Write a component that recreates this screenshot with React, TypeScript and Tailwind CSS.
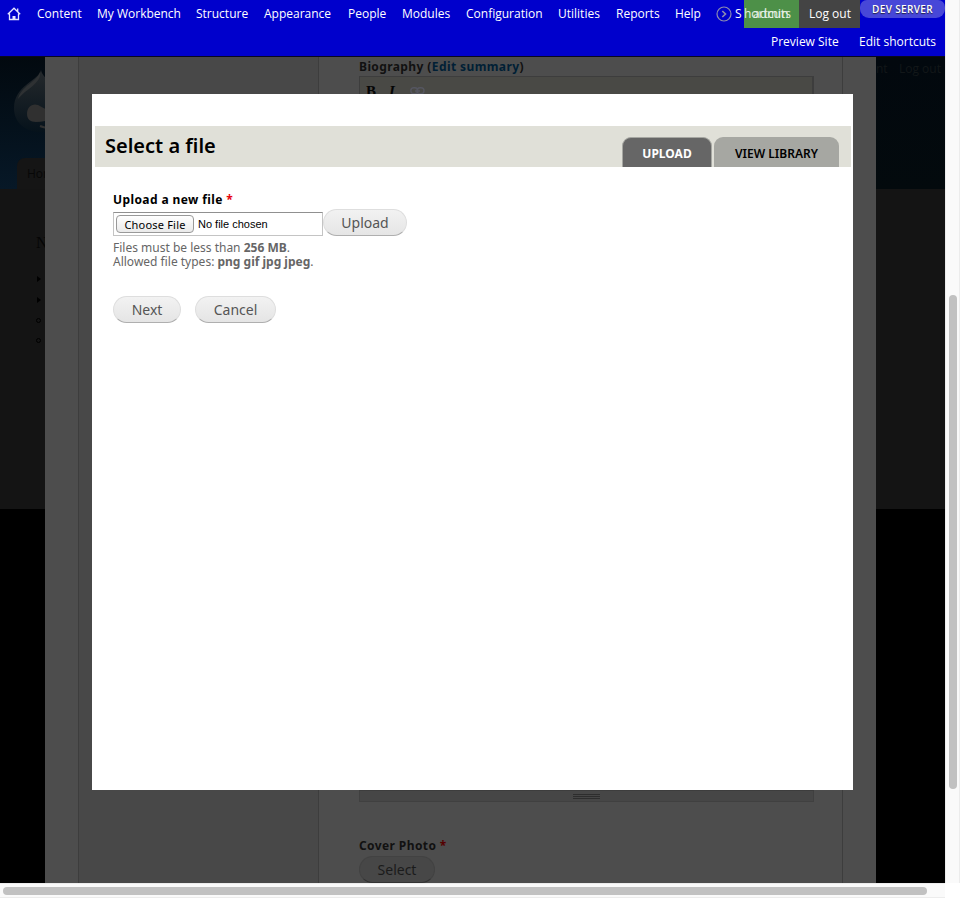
import React from "react";

const menu: [string, string][] = [
  ["Content", "w-[60px]"],
  ["My Workbench", "w-[99px]"],
  ["Structure", "w-[68px]"],
  ["Appearance", "w-[84px]"],
  ["People", "w-[54px]"],
  ["Modules", "w-[64px]"],
  ["Configuration", "w-[92px]"],
  ["Utilities", "w-[58px]"],
  ["Reports", "w-[59px]"],
  ["Help", "w-[41px]"],
];

function Toolbar() {
  return (
    <header className="relative h-[57px] shrink-0 border-b border-[#080820] bg-[#0000cc] font-['Open_Sans',sans-serif] text-[12px] font-medium text-white">
      <div className="flex h-7 items-center whitespace-nowrap leading-7">
        <svg className="ml-[7px] mr-[16px] shrink-0" width="14" height="14" viewBox="0 0 14 14" fill="none" stroke="#e4e4ff" strokeWidth="1.3">
          <path d="M.8 7.2 7 1.2l6.2 6M2.5 6.5v6h9v-6M10.7 4.4V1.5" />
          <path d="M5.5 9h3v3.5h-3z" fill="#e4e4ff" stroke="none" />
        </svg>
        <nav className="flex">
          {menu.map(([label, width]) => (
            <a key={label} className={`${width} shrink-0`}>{label}</a>
          ))}
        </nav>
        <svg className="mr-[3px] shrink-0" width="16" height="16" viewBox="0 0 16 16" fill="none" stroke="#8c8cb0" strokeWidth="1.2">
          <circle cx="8" cy="8" r="7" />
          <path d="m6.3 5 3.2 3-3.2 3" strokeWidth="1.6" />
        </svg>
        <a className="w-[9px] shrink-0">S</a>
        <span className="relative h-7 w-[55px] shrink-0 bg-[#4d9048]">
          <span className="absolute left-0 top-0 text-[#e5f0e5]">hortcuts</span>
          <span className="absolute left-[9px] top-0 text-[#e5f0e5]">admin</span>
        </span>
        <a className="h-7 w-[61px] shrink-0 bg-[#444] pl-[10px]">Log out</a>
        <span className="h-[18px] w-[85px] shrink-0 self-start rounded-b-[9px] rounded-t-[7px] bg-[#4747d8] text-center text-[10px] font-semibold leading-[18px] tracking-[0.35px] [text-shadow:0_1px_1px_#224]">DEV SERVER</span>
      </div>
      <div className="flex h-7 justify-end leading-7">
        <a className="w-[88px]">Preview Site</a>
        <a className="w-[86px]">Edit shortcuts</a>
      </div>
    </header>
  );
}

function LeftStrip() {
  return (
    <aside className="flex w-[45px] shrink-0 flex-col overflow-hidden bg-black">
      <div className="flex h-[132px] flex-col bg-linear-to-b from-[#02090f] to-[#071827]">
        <svg className="ml-[14px] mt-[12px] shrink-0" width="50" height="66" viewBox="0 0 50 66">
          <defs>
            <linearGradient id="drop" x1="0" y1="0" x2="0" y2="1">
              <stop offset="0" stopColor="#25292c" />
              <stop offset="1" stopColor="#06121b" />
            </linearGradient>
          </defs>
          <path d="M27 1C25 12 0 16 0 39c0 16 13 24 27 24s23-9 23-24C50 19 29 12 27 1Z" fill="url(#drop)" />
          <path d="M26 3C23 13 7 17 4 30 12 20 28 14 26 3Z" fill="#2e3133" />
          <path d="M13 45c0-7 5-11 11-9 6 3 10 6 15 8v4c-5 4-11 5-17 5s-9-3-9-8Z" fill="#303030" />
          <path d="M26 57c5 2 9 2 12 1" stroke="#303030" strokeWidth="2" fill="none" />
        </svg>
        <div className="ml-[17px] mt-auto h-[31px] w-10 shrink-0 rounded-tl-lg bg-[#151515] pl-[10px] font-['Open_Sans',sans-serif] text-[12px] leading-[31px] text-[#070707]">Home</div>
      </div>
      <div className="h-[320px] shrink-0 bg-[#141414] pl-[36px] pt-[43px] text-[#050505]">
        <div className="h-[22px] font-['Liberation_Serif',serif] text-[16px] leading-[22px]">N</div>
        <div className="mt-[22px] flex flex-col gap-[15px]">
          <i className="h-0 w-0 border-y-[3px] border-l-[4px] border-y-transparent border-l-black ml-px" />
          <i className="h-0 w-0 border-y-[3px] border-l-[4px] border-y-transparent border-l-black ml-px" />
          <i className="h-[5px] w-[5px] rounded-full border border-black" />
          <i className="h-[5px] w-[5px] rounded-full border border-black" />
        </div>
      </div>
    </aside>
  );
}

function RightStrip() {
  return (
    <aside className="flex w-[69px] shrink-0 flex-col overflow-hidden bg-black">
      <div className="flex h-[132px] bg-linear-to-b from-[#02080e] to-[#030a0d] font-['Open_Sans',sans-serif] text-[12px] leading-6 text-[#121719]">
        <span className="w-[23px]">nt</span>
        <span className="whitespace-nowrap">Log out</span>
      </div>
      <div className="h-[320px] bg-[#141414]" />
    </aside>
  );
}

function EditForm() {
  return (
    <main className="flex w-[831px] shrink-0 bg-[#4d4d4d] px-[33px] font-['Noto_Sans',sans-serif]">
      <div className="w-[241px] shrink-0 border-x border-[#3d3d3d] bg-[#484848]" />
      <div className="flex grow flex-col border-r border-[#3d3d3d] pl-[40px]">
        <div className="h-[19px] whitespace-nowrap text-[12px] font-bold leading-[19px] tracking-[0.4px] text-[#111]">
          Biography (<a className="text-[#001f35]">Edit summary</a>)
        </div>
        <div className="flex h-[715px] w-[455px] border border-r-2 border-[#3d3d3d] bg-[#494945] pl-[6px] pt-[5px] font-['Liberation_Serif',serif] text-[15px] font-bold leading-[18px] text-[#050505]">
          <span className="w-[23px]">B</span>
          <span className="w-[21px] italic">I</span>
          <svg width="15" height="8" viewBox="0 0 15 8" className="mt-[5px]" fill="none" stroke="#555660" strokeWidth="1.4">
            <rect x=".8" y=".8" width="7" height="6" rx="3" /><rect x="7" y=".8" width="7" height="6" rx="3" /><path d="M5 4h5" />
          </svg>
        </div>
        <div className="flex h-[11px] w-[455px] justify-center border border-t-0 border-[#404040] bg-[#464646] pt-[3px]">
          <div className="h-[5px] w-[27px] border-y border-[#2d2d2d] pt-px"><div className="h-px bg-[#2d2d2d]" /></div>
        </div>
        <div className="mt-[34px] h-[19px] text-[12px] font-bold leading-[19px] tracking-[0.4px] text-[#111]">Cover Photo <span className="text-[#500]">*</span></div>
        <button className="mt-[1px] h-[27px] w-[76px] shrink-0 rounded-full border border-[#424242] border-b-[#333] bg-[#474747] text-[14px] leading-[25px] text-[#1b1b1b]">Select</button>
      </div>
    </main>
  );
}

function Pill({ label, width }: { label: string; width: string }) {
  return (
    <button className={`${width} h-[27px] shrink-0 rounded-full border border-[#dedede] border-b-[#afafaf] bg-linear-to-b from-[#f2f2f2] to-[#e5e5e5] text-[14px] leading-[25px] text-[#555]`}>{label}</button>
  );
}

function Modal() {
  return (
    <section className="absolute left-[92px] top-[94px] h-[696px] w-[761px] bg-white pt-[32px] font-['Noto_Sans',sans-serif]">
      <div className="ml-[3px] flex h-[41px] w-[756px] items-end bg-[#e0e0d8] pl-[10px] pr-[12px]">
        <h1 className="h-[41px] text-[20px] font-semibold leading-[39px] text-black">Select a file</h1>
        <div className="ml-auto flex gap-[2px] text-[12px] leading-[31px]">
          <a className="h-[30px] w-[90px] rounded-t-[9px] border border-b-0 border-[#a6a7a2] bg-[#666] text-center font-bold text-white">UPLOAD</a>
          <a className="h-[30px] w-[125px] rounded-t-[9px] bg-[#a6a7a2] pt-px text-center font-semibold text-black">VIEW LIBRARY</a>
        </div>
      </div>
      <form className="pl-[21px] pt-[23px]">
        <label className="block h-[20px] text-[12px] font-bold leading-[20px] tracking-[0.4px] text-black">Upload a new file <span className="text-red-600">*</span></label>
        <div className="mt-[-1px] flex">
          <div className="mt-[3px] flex h-[24px] w-[210px] items-center border border-[#c4c4c4] border-t-[#909090] bg-white pl-[2px]">
            <span className="h-[18px] w-[78px] rounded-[4px] border border-[#999] bg-linear-to-b from-white to-[#eaeaea] text-center text-[11px] leading-[17px] tracking-[0.2px] text-black">Choose File</span>
            <span className="ml-[4px] font-['Liberation_Sans',sans-serif] text-[11px]">No file chosen</span>
          </div>
          <Pill label="Upload" width="w-[84px]" />
        </div>
        <p className="mt-[5px] text-[12px] leading-[14px] text-[#666]">Files must be less than <b>256 MB</b>.<br />Allowed file types: <b>png gif jpg jpeg</b>.</p>
        <div className="mt-[27px] flex gap-[14px]">
          <Pill label="Next" width="w-[68px]" />
          <Pill label="Cancel" width="w-[81px]" />
        </div>
      </form>
    </section>
  );
}

export default function App() {
  return (
    <div className="flex h-[898px] w-[960px] flex-col overflow-hidden bg-white">
      <div className="flex h-[883px]">
        <div className="relative flex w-[945px] flex-col overflow-hidden">
          <Toolbar />
          <div className="flex h-[826px] overflow-hidden"><LeftStrip /><EditForm /><RightStrip /></div>
          <Modal />
        </div>
        <div className="w-[15px] border-x border-[#ececec] bg-[#fafafa] pl-[3px] pt-[295px]">
          <div className="h-[494px] w-2 rounded-full bg-[#c1c1c1]" />
        </div>
      </div>
      <div className="h-[15px] w-[945px] border-y border-[#ececec] bg-[#fafafa] pl-[3px] pt-[3px]">
        <div className="h-2 w-[924px] rounded-full bg-[#c1c1c1]" />
      </div>
    </div>
  );
}
